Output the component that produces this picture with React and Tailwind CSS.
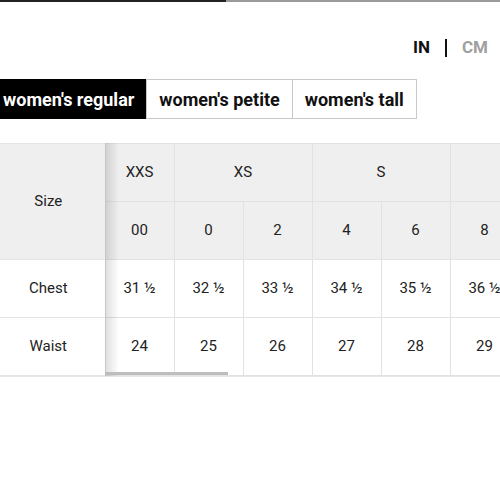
import React, { useState } from 'react';

const groups = [
  { label: 'XXS', sizes: ['00'] },
  { label: 'XS', sizes: ['0', '2'] },
  { label: 'S', sizes: ['4', '6'] },
  { label: 'M', sizes: ['8', '10'] },
  { label: 'L', sizes: ['12', '14'] },
  { label: 'XL', sizes: ['16', '18'] },
];

const rows = [
  { name: 'Chest', values: ['31 ½', '32 ½', '33 ½', '34 ½', '35 ½', '36 ½', '37 ½', '39', '40 ½', '42', '43 ½'] },
  { name: 'Waist', values: ['24', '25', '26', '27', '28', '29', '30', '31 ½', '33', '34 ½', '36'] },
];

const tabs = ["women's regular", "women's petite", "women's tall"];

const App = () => {
  const [tab, setTab] = useState(0);
  const [unit, setUnit] = useState('IN');

  return (
    <div className="w-[500px] h-[489px] bg-white overflow-hidden text-[#222]" style={{ fontFamily: "Roboto, 'Liberation Sans', sans-serif" }}>
      {/* progress line */}
      <div className="flex h-[2px]">
        <div className="w-[226px] bg-[#222]" />
        <div className="flex-1 bg-[#9a9a9a]" />
      </div>

      <div className="flex justify-end items-center pr-[12px] pt-[34px] h-[58px] text-[17px] font-bold">
        <button onClick={() => setUnit('IN')} className={unit === 'IN' ? 'text-[#111]' : 'text-[#a0a0a0]'}>IN</button>
        <span className="mx-[15px] w-[2px] h-[18px] bg-[#111]" />
        <button onClick={() => setUnit('CM')} className={unit === 'CM' ? 'text-[#111]' : 'text-[#a0a0a0]'}>CM</button>
      </div>

      <div className="flex mt-[19px] ml-[-10px]">
        {tabs.map((t, i) => (
          <button
            key={t}
            onClick={() => setTab(i)}
            className={
              'h-[40px] px-[12px] text-[18px] font-bold border border-[#c9c9c9] -ml-px first:ml-0 ' +
              (tab === i ? 'bg-black text-white border-black' : 'bg-white text-[#111]')
            }
          >
            {t}
          </button>
        ))}
      </div>

      <div className="relative mt-[24px] overflow-hidden border-b border-[#e6e6e6]">
        <table className="border-collapse table-fixed text-[15px] text-center">
          <thead>
            <tr className="h-[58px] bg-[#efefef]">
              <th rowSpan={2} className="sticky left-0 z-10 w-[105px] min-w-[105px] pr-[8px] bg-[#efefef] font-normal border-y border-[#e4e4e4]">
                Size
              </th>
              {groups.map((g) => (
                <th key={g.label} colSpan={g.sizes.length} className="font-normal border border-[#e2e2e2]">
                  {g.label}
                </th>
              ))}
            </tr>
            <tr className="h-[58px] bg-[#efefef]">
              {groups.flatMap((g) => g.sizes).map((s) => (
                <th key={s} className="w-[69px] min-w-[69px] font-normal border border-[#e2e2e2]">
                  {s}
                </th>
              ))}
            </tr>
          </thead>
          <tbody>
            {rows.map((r) => (
              <tr key={r.name} className="h-[58px]">
                <td className="sticky left-0 z-10 pr-[8px] bg-white border-y border-[#e4e4e4]">
                  {r.name}
                </td>
                {r.values.map((v, i) => (
                  <td key={i} className="border border-[#e2e2e2]">{v}</td>
                ))}
              </tr>
            ))}
          </tbody>
        </table>
        {/* sticky column shadow */}
        <div className="absolute left-[105px] top-0 bottom-0 w-[14px] bg-linear-to-r from-[rgba(0,0,0,0.13)] to-transparent z-20 pointer-events-none" />
        {/* scrollbar */}
        <div className="absolute left-[105px] bottom-[1px] w-[123px] h-[3px] bg-[#bdbdbd] z-20" />
      </div>
    </div>
  );
};

export default App;
